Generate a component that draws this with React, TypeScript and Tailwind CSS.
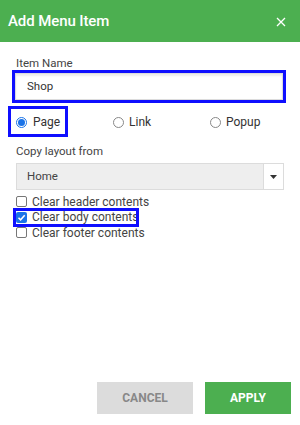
import React from "react";

export default function App() {
  return (
    <div className="w-[300px] h-[425px] bg-white flex flex-col" style={{ fontFamily: "Roboto, 'Liberation Sans', sans-serif" }}>
      <div className="h-[42px] bg-[#4caf50] flex items-center justify-between pl-[8px] pr-[14px] shrink-0">
        <span className="text-white text-[15px] font-medium tracking-[-0.1px]">Add Menu Item</span>
        <svg width="10" height="10" viewBox="0 0 10 10" className="mt-[1px]">
          <path d="M1 1L9 9M9 1L1 9" stroke="white" strokeWidth="1.3" />
        </svg>
      </div>
      <div className="flex flex-col px-[12px] pt-[14px] flex-1">
        <div className="pl-[4px] text-[11.5px] leading-[14px] text-[#444]">Item Name</div>
        <div className="h-[33px] border-[3px] border-[#0f0fff] p-0 w-[274px]">
          <div className="h-full border border-[#dcdcdc] bg-white shadow-[inset_0_2px_2px_rgba(0,0,0,0.08)] flex items-center pl-[11px] text-[11.5px] text-[#333]">
            Shop
          </div>
        </div>
        <div className="flex items-center mt-[3px] h-[32px] relative">
          <div className="absolute left-[-4px] top-0 w-[60px] h-[31px] border-[3px] border-[#0f0fff]"></div>
          <div className="flex items-center w-[101px] pl-[4px]">
            <span className="w-[11px] h-[11px] rounded-full border border-[#1a73e8] flex items-center justify-center bg-white">
              <span className="w-[7px] h-[7px] rounded-full bg-[#1a73e8]"></span>
            </span>
            <span className="ml-[6px] text-[12px] text-[#333]">Page</span>
          </div>
          <div className="flex items-center w-[97px]">
            <span className="w-[11px] h-[11px] rounded-full border border-[#888] bg-white"></span>
            <span className="ml-[5px] text-[12px] text-[#333]">Link</span>
          </div>
          <div className="flex items-center">
            <span className="w-[11px] h-[11px] rounded-full border border-[#888] bg-white"></span>
            <span className="ml-[5px] text-[12px] text-[#333]">Popup</span>
          </div>
        </div>
        <div className="pl-[4px] mt-[6px] text-[11.5px] leading-[14px] text-[#444]">Copy layout from</div>
        <div className="ml-[4px] mt-[5px] h-[27px] w-[268px] flex border border-[#dcdcdc]">
          <div className="flex-1 bg-[#eeeeee] flex items-center pl-[10px] text-[11.5px] text-[#444]">Home</div>
          <div className="w-[20px] bg-white border-l border-[#dcdcdc] flex items-center justify-center">
            <svg width="7" height="4" viewBox="0 0 7 4"><path d="M0 0H7L3.5 4Z" fill="#333" /></svg>
          </div>
        </div>
        <div className="flex flex-col mt-[4px] pl-[4px]">
          <div className="flex items-center h-[15px]">
            <span className="w-[11px] h-[11px] rounded-[2px] border border-[#777] bg-white"></span>
            <span className="ml-[5px] text-[12px] text-[#444]">Clear header contents</span>
          </div>
          <div className="relative flex items-center h-[16px]">
            <div className="absolute left-[-3px] top-[-1px] w-[126px] h-[19px] border-[3px] border-[#0f0fff]"></div>
            <span className="w-[11px] h-[11px] rounded-[2px] bg-[#1a73e8] flex items-center justify-center">
              <svg width="9" height="9" viewBox="0 0 9 9"><path d="M1.5 4.7L3.6 6.8L7.7 2.2" stroke="white" strokeWidth="1.5" fill="none" /></svg>
            </span>
            <span className="ml-[5px] text-[12px] text-[#444]">Clear body contents</span>
          </div>
          <div className="flex items-center h-[15px]">
            <span className="w-[11px] h-[11px] rounded-[2px] border border-[#777] bg-white"></span>
            <span className="ml-[5px] text-[12px] text-[#444]">Clear footer contents</span>
          </div>
        </div>
        <div className="flex-1"></div>
        <div className="flex justify-end gap-[12px] mb-[11px] mr-[-3px]">
          <button className="w-[96px] h-[32px] bg-[#dcdcdc] text-[#888] text-[12px] font-bold">CANCEL</button>
          <button className="w-[86px] h-[32px] bg-[#4caf50] text-white text-[12px] font-bold">APPLY</button>
        </div>
      </div>
    </div>
  );
}
